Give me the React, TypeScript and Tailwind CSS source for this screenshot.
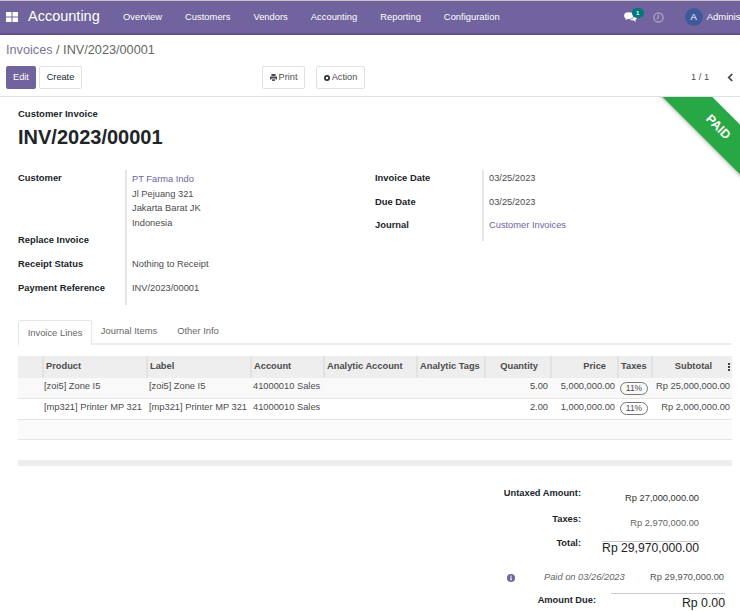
import React from "react";

const nav = ["Overview", "Customers", "Vendors", "Accounting", "Reporting", "Configuration"];

function Field({ label, children, h }: { label: string; children?: React.ReactNode; h: string }) {
  return (
    <div className={`flex ${h}`}>
      <div className="w-[107px] shrink-0 pr-2 pt-[1px] font-bold leading-[13px] text-[#212529]">{label}</div>
      <div className="flex-1 border-l-2 border-[#e5e5e5] pl-[5px] pt-[2px] text-[9.3px] leading-[13px] text-[#4c4c4c]">{children}</div>
    </div>
  );
}

const head = [
  { t: "", a: "text-left" },
  { t: "Product", a: "text-left" },
  { t: "Label", a: "text-left" },
  { t: "Account", a: "text-left" },
  { t: "Analytic Account", a: "text-left" },
  { t: "Analytic Tags", a: "text-left" },
  { t: "Quantity", a: "text-right pr-[12px]" },
  { t: "Price", a: "text-right pr-[11px]" },
  { t: "Taxes", a: "text-left" },
  { t: "Subtotal", a: "text-right pr-[20px]" },
];

const rows = [
  ["[zoi5] Zone I5", "[zoi5] Zone I5", "41000010 Sales", "5.00", "5,000,000.00", "Rp 25,000,000.00"],
  ["[mp321] Printer MP 321", "[mp321] Printer MP 321", "41000010 Sales", "2.00", "1,000,000.00", "Rp 2,000,000.00"],
];

export default function App() {
  return (
    <div className="h-[611px] w-[740px] overflow-hidden bg-white font-['Liberation_Sans',Arial,sans-serif] text-[9.4px] text-[#4c4c4c]">
      <header className="flex h-[35px] items-center overflow-hidden border-b-2 border-t border-b-[#5f5288] border-t-[#c4c0cc] bg-[#71639e] text-white">
        <svg viewBox="0 0 12 10" className="ml-[6px] h-[10px] w-[12px] shrink-0 fill-white">
          <rect x="0" y="0" width="5.5" height="4.5" />
          <rect x="6.5" y="0" width="5.5" height="4.5" />
          <rect x="0" y="5.5" width="5.5" height="4.5" />
          <rect x="6.5" y="5.5" width="5.5" height="4.5" />
        </svg>
        <span className="ml-[10px] w-[95px] shrink-0 text-[14.5px]">Accounting</span>
        <nav className="flex shrink-0 gap-[23px] text-[9.4px]">
          {nav.map((n) => (
            <span key={n}>{n}</span>
          ))}
        </nav>
        <div className="relative ml-[124px] h-[10px] w-[13px] shrink-0">
          <svg viewBox="0 0 14 11" className="h-[10px] w-[13px] fill-white">
            <ellipse cx="5" cy="4" rx="5" ry="3.6" />
            <path d="M2 6 1.500 9 5 7z" />
            <path d="M10.500 3.200c2 .4 3.500 1.600 3.500 3 0 1-.7 1.900-1.700 2.400l.7 2.400-3-2H7.500c-.8 0-1.500-.2-2.100-.5 3 0 5.800-1.900 5.100-5.300z" />
          </svg>
          <span className="absolute -right-[7px] -top-[4px] flex h-[10px] w-[12px] items-center justify-center rounded-full bg-[#00797c] text-[6px] font-bold text-white">1</span>
        </div>
        <svg viewBox="0 0 12 12" className="ml-[16px] h-[11px] w-[11px] shrink-0 fill-none stroke-[#a69dc2] stroke-[1.600]">
          <circle cx="6" cy="6" r="5" />
          <path d="M6 3v3.200L4.200 7.500" />
        </svg>
        <span className="ml-[21px] flex h-[18px] w-[18px] shrink-0 items-center justify-center rounded-full bg-[#3f5a9a] text-[9.5px]">A</span>
        <span className="ml-[4px] whitespace-nowrap text-[9.5px]">Administrator</span>
      </header>

      <section className="h-[62px] border-b border-[#dee2e6] px-[6px] pt-[7px]">
        <div className="text-[12.7px] leading-[17px] text-[#666666]">
          <span className="text-[#7c7396]">Invoices</span> / INV/2023/00001
        </div>
        <div className="mt-[7px] flex h-[23px] items-stretch text-[9.2px]">
          <button className="w-[30px] rounded-[2px] bg-[#71639e] text-white">Edit</button>
          <button className="ml-[3px] w-[43px] rounded-[2px] border border-[#dee2e6] text-[#212529]">Create</button>
          <button className="ml-[180px] flex w-[43px] items-center justify-center gap-[2px] rounded-[2px] border border-[#dee2e6] text-[#4c4c4c]">
            <svg viewBox="0 0 10 10" className="h-[7px] w-[7px] fill-[#4c4c4c]">
              <path d="M2 0h6v3H2zM0 3.500h10V8H8V6.500H2V8H0zM3 7.500h4V10H3z" />
            </svg>
            Print
          </button>
          <button className="ml-[11px] flex w-[49px] items-center justify-center gap-[2px] rounded-[2px] border border-[#dee2e6] text-[#4c4c4c]">
            <svg viewBox="0 0 10 10" className="h-[6px] w-[6px]">
              <circle cx="5" cy="5" r="3.500" fill="none" stroke="#333" strokeWidth="3" />
            </svg>
            Action
          </button>
          <div className="ml-auto flex items-center gap-[18px] text-[#4c4c4c]">
            <span>1 / 1</span>
            <svg viewBox="0 0 8 10" className="h-[9px] w-[7px] fill-none stroke-[#444] stroke-2">
              <path d="M6 1 2 5l4 4" />
            </svg>
          </div>
        </div>
      </section>

      <main className="relative h-[514px] overflow-hidden pl-[18px] pr-[8px] pt-[11px]">
        <div className="absolute left-[620px] top-[15px] flex h-[35px] w-[200px] rotate-45 items-center justify-center bg-[#28a745] shadow-[0_1px_4px_rgba(0,0,0,0.3)]">
          <span className="-translate-x-[3px] text-[12.5px] font-bold text-white">PAID</span>
        </div>

        <div className="text-[9.5px] font-bold leading-[12px] text-[#212529]">Customer Invoice</div>
        <h1 className="mt-[4px] text-[20px] font-bold leading-[26px] text-[#212529]">INV/2023/00001</h1>

        <div className="mt-[20px] flex">
          <div className="w-[357px] shrink-0">
            <Field label="Customer" h="h-[62px]">
              <div className="mt-[1px] text-[#71639e]">PT Farma Indo</div>
              <div className="mt-[2px]">Jl Pejuang 321</div>
              <div className="mt-[1px]">Jakarta Barat JK</div>
              <div className="mt-[2px]">Indonesia</div>
            </Field>
            <Field label="Replace Invoice" h="h-[24px]" />
            <Field label="Receipt Status" h="h-[24px]">Nothing to Receipt</Field>
            <Field label="Payment Reference" h="h-[25px]">INV/2023/00001</Field>
          </div>
          <div className="w-[357px] shrink-0">
            <Field label="Invoice Date" h="h-[24px]">03/25/2023</Field>
            <Field label="Due Date" h="h-[23px]">03/25/2023</Field>
            <Field label="Journal" h="h-[24px]">
              <span className="text-[#71639e]">Customer Invoices</span>
            </Field>
          </div>
        </div>

        <div className="mt-[15px] flex h-[25px] border-b-2 border-[#eceeef] text-[#666666]">
          <div className="-mb-[2px] flex h-[25px] w-[74px] items-center justify-center rounded-t-[2px] border border-b-0 border-[#e3e5e8] bg-white">Invoice Lines</div>
          <div className="flex w-[74px] items-center justify-center">Journal Items</div>
          <div className="ml-[5px] flex w-[54px] items-center justify-center">Other Info</div>
        </div>

        <table className="mt-[11px] w-[714px] table-fixed border-collapse text-[9.3px]">
          <colgroup>
            <col className="w-[25px]" />
            <col className="w-[104px]" />
            <col className="w-[104px]" />
            <col className="w-[73px]" />
            <col className="w-[93px]" />
            <col className="w-[68px]" />
            <col className="w-[66px]" />
            <col className="w-[67px]" />
            <col className="w-[34px]" />
            <col className="w-[80px]" />
          </colgroup>
          <thead>
            <tr className="h-[22px] bg-[#eeeeee] text-[#4c4c4c]">
              {head.map((c, i) => (
                <th key={i} className={`relative border-l-2 border-[#e2e2e2] pl-[2px] font-bold first:border-l-0 ${c.a}`}>
                  {c.t}
                  {i === 9 && (
                    <span className="absolute right-[2px] top-[7px] flex flex-col gap-[1px]">
                      <i className="block h-[2px] w-[2px] bg-[#444]" />
                      <i className="block h-[2px] w-[2px] bg-[#444]" />
                      <i className="block h-[2px] w-[2px] bg-[#444]" />
                    </span>
                  )}
                </th>
              ))}
            </tr>
          </thead>
          <tbody>
            {rows.map((r, i) => (
              <tr key={i} className={`h-[20.5px] border-b border-[#e6e6e6] ${i === 0 ? "bg-[#f9f9f9]" : "bg-white"}`}>
                <td />
                <td className="overflow-hidden whitespace-nowrap pb-[2px] pl-[1px]">{r[0]}</td>
                <td className="overflow-hidden whitespace-nowrap pb-[2px] pl-[2px]">{r[1]}</td>
                <td className="overflow-hidden whitespace-nowrap pb-[2px] pl-[2px]">{r[2]}</td>
                <td />
                <td />
                <td className="pb-[2px] pr-[3px] text-right">{r[3]}</td>
                <td className="pb-[2px] pr-[3px] text-right">{r[4]}</td>
                <td className="pl-[2px]">
                  <span className="flex h-[13px] w-[28px] items-center justify-center rounded-[7px] border border-[#777] text-[8.5px]">11%</span>
                </td>
                <td className="whitespace-nowrap pb-[2px] pr-[2px] text-right">{r[5]}</td>
              </tr>
            ))}
            <tr className="h-[20.5px] border-b border-[#e6e6e6] bg-[#fbfbfb]">
              <td colSpan={10} />
            </tr>
            <tr className="h-[20px] bg-white">
              <td colSpan={10} />
            </tr>
          </tbody>
        </table>
        <div className="h-[6px] w-[714px] bg-[#eeeeee]" />

        <div className="ml-[462px] mt-[21px] text-[9.3px]">
          <div className="flex h-[26px]">
            <span className="w-[101px] text-right font-bold leading-[12px] text-[#212529]">Untaxed Amount:</span>
            <span className="w-[118px] pt-[5px] text-right leading-[12px] text-[#333333]">Rp 27,000,000.00</span>
          </div>
          <div className="flex h-[24px]">
            <span className="w-[101px] text-right font-bold leading-[12px] text-[#212529]">Taxes:</span>
            <span className="w-[118px] pt-[4px] text-right leading-[12px] text-[#666666]">Rp 2,970,000.00</span>
          </div>
          <div className="flex h-[28px]">
            <span className="w-[101px] text-right font-bold leading-[12px] text-[#212529]">Total:</span>
            <span className="ml-[21px] mt-[4px] h-[17px] w-[97px] whitespace-nowrap border-t border-[#cccccc] text-right text-[12.2px] leading-[13px] text-[#222222]">Rp 29,970,000.00</span>
          </div>
          <div className="mt-[6px] flex h-[14px] items-center">
            <svg viewBox="0 0 10 10" className="ml-[27px] h-[8px] w-[8px] shrink-0">
              <circle cx="5" cy="5" r="5" fill="#71639e" />
              <rect x="4.200" y="4.200" width="1.600" height="3.800" fill="#fff" />
              <rect x="4.200" y="2" width="1.600" height="1.500" fill="#fff" />
            </svg>
            <span className="ml-[29px] w-[81px] whitespace-nowrap italic text-[#666666]">Paid on 03/26/2023</span>
            <span className="w-[99px] whitespace-nowrap text-right text-[#555555]">Rp 29,970,000.00</span>
          </div>
          <div className="mt-[8px] flex">
            <span className="w-[116px] pt-[1px] text-right font-bold leading-[12px] text-[#212529]">Amount Due:</span>
            <span className="ml-[15px] w-[114px] border-t border-[#cccccc] pt-[2px] text-right text-[12.3px] leading-[14px] text-[#222222]">Rp 0.00</span>
          </div>
        </div>
      </main>
    </div>
  );
}
